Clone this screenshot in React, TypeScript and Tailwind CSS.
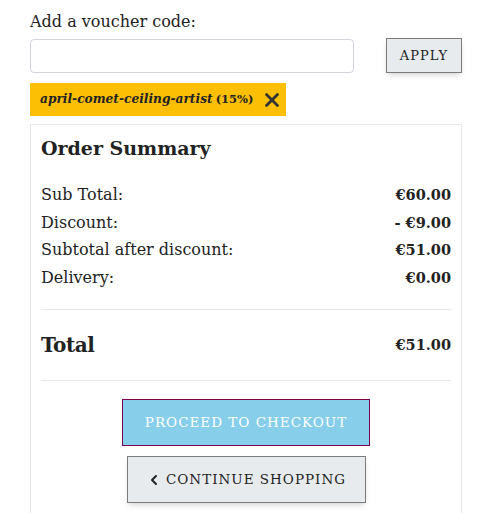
import { X, ChevronLeft } from 'lucide-react';

const rows = [
  { label: 'Sub Total:', value: '€60.00' },
  { label: 'Discount:', value: '- €9.00' },
  { label: 'Subtotal after discount:', value: '€51.00' },
  { label: 'Delivery:', value: '€0.00' },
];

export default function App() {
  return (
    <div className="min-h-screen bg-white pl-[30px] pt-2 text-[#222] font-['DejaVu_Serif',serif]">
      <div className="w-[432px]">
        <label className="block text-[16px] leading-[27px] mb-[3px]">Add a voucher code:</label>
        <div className="flex items-center justify-between">
          <input
            type="text"
            className="w-[324px] h-[34px] rounded border border-gray-300 px-3 outline-none"
          />
          <button className="h-[35px] w-[76px] border border-[#7c7c7c] bg-[#e8ebee] text-[13px] tracking-[1px] shadow-md">
            APPLY
          </button>
        </div>

        <div className="mt-[10px] inline-flex h-[33px] items-center gap-[8px] bg-[#fcbf04] pl-[10px] pr-[3px]">
          <span className="flex items-baseline">
            <span className="text-[12.2px] font-bold italic">april-comet-ceiling-artist</span>
            <span className="ml-[3px] text-[11.5px] font-semibold">(15%)</span>
          </span>
          <X size={22} strokeWidth={3} className="text-[#333]" />
        </div>

        <div className="mt-[8px] border border-gray-200 px-[10px] pt-2 pb-10">
          <h2 className="text-[19px] font-bold leading-[30px]">Order Summary</h2>

          <div className="mt-[18px] text-[16px]">
            {rows.map((r) => (
              <div key={r.label} className="flex items-center justify-between leading-[27.5px]">
                <span>{r.label}</span>
                <span className="text-[14.5px] font-bold">{r.value}</span>
              </div>
            ))}
          </div>

          <div className="mt-[18px] border-t border-gray-200" />
          <div className="flex items-center justify-between py-5 leading-[30px]">
            <span className="text-[20px] font-bold tracking-[-0.5px]">Total</span>
            <span className="text-[14.5px] font-bold">€51.00</span>
          </div>
          <div className="border-t border-gray-200" />

          <div className="mt-[18px] flex flex-col items-center gap-[10px]">
            <button className="h-[47px] w-[248px] border border-[#800055] bg-[#87ceeb] text-[13.5px] tracking-[1px] text-white">
              PROCEED TO CHECKOUT
            </button>
            <button className="flex h-[47px] w-[239px] items-center justify-center gap-1 border border-[#7c7c7c] bg-[#e8ebee] text-[13.5px] tracking-[1px] shadow-md">
              <ChevronLeft size={16} strokeWidth={3} />
              CONTINUE SHOPPING
            </button>
          </div>
        </div>
      </div>
    </div>
  );
}
